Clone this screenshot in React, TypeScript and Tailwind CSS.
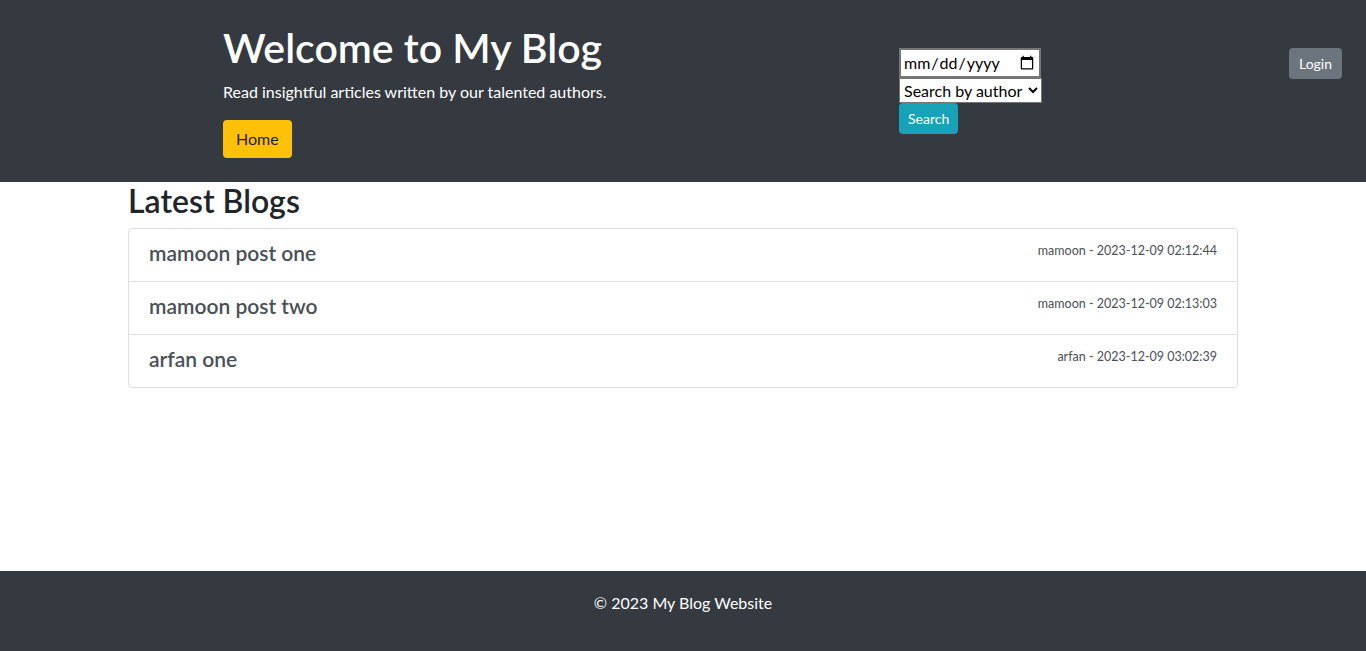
import React from 'react';

const posts = [
  { title: 'mamoon post one', author: 'mamoon', date: '2023-12-09 02:12:44' },
  { title: 'mamoon post two', author: 'mamoon', date: '2023-12-09 02:13:03' },
  { title: 'arfan one', author: 'arfan', date: '2023-12-09 03:02:39' },
];

function App() {
  return (
    <div className="min-h-screen flex flex-col bg-white text-[#212529] font-['Lato',sans-serif]">
      <header className="bg-[#343a40] text-white flex pl-[223px] pr-6 py-6">
        <div className="w-[676px]">
          <h1 className="text-[41px] leading-[48px] font-semibold mb-2">Welcome to My Blog</h1>
          <p className="text-base leading-6 mb-4">Read insightful articles written by our talented authors.</p>
          <button className="bg-[#ffc107] text-[#212529] text-base leading-6 px-[13px] py-[7px] rounded">Home</button>
        </div>
        <form className="flex flex-col items-start mt-6" onSubmit={(e) => e.preventDefault()}>
          <input
            type="date"
            className="w-[142px] h-[30px] bg-white text-black border-2 border-[#767676] px-[2px] text-base"
          />
          <select className="w-[143px] h-[25px] bg-white text-black border border-[#767676] text-base">
            <option>Search by author</option>
            <option>mamoon</option>
            <option>arfan</option>
          </select>
          <button className="bg-[#17a2b8] text-white text-sm leading-[21px] px-[9px] py-[5px] rounded">Search</button>
        </form>
        <div className="flex-1" />
        <div className="mt-6">
          <button className="bg-[#6c757d] text-white text-sm leading-[21px] px-[10px] py-[5px] rounded">Login</button>
        </div>
      </header>

      <main className="flex-1 w-[1110px] mx-auto">
        <h2 className="text-[32px] leading-[38px] font-semibold mb-2">Latest Blogs</h2>
        <div className="border border-black/[.125] rounded">
          {posts.map((p, i) => (
            <div
              key={p.title}
              className={`flex justify-between items-start px-5 pt-3 pb-3 ${i > 0 ? 'border-t border-black/[.125]' : ''}`}
            >
              <h5 className="text-[21px] leading-6 font-semibold text-[#495057] mb-1">{p.title}</h5>
              <small className="text-[12.5px] leading-[19px] text-[#495057]">
                {p.author} - {p.date}
              </small>
            </div>
          ))}
        </div>
      </main>

      <footer className="bg-[#343a40] text-white text-center h-[80px] pt-5">
        <p className="text-base leading-6">© 2023 My Blog Website</p>
      </footer>
    </div>
  );
}

export default App;
